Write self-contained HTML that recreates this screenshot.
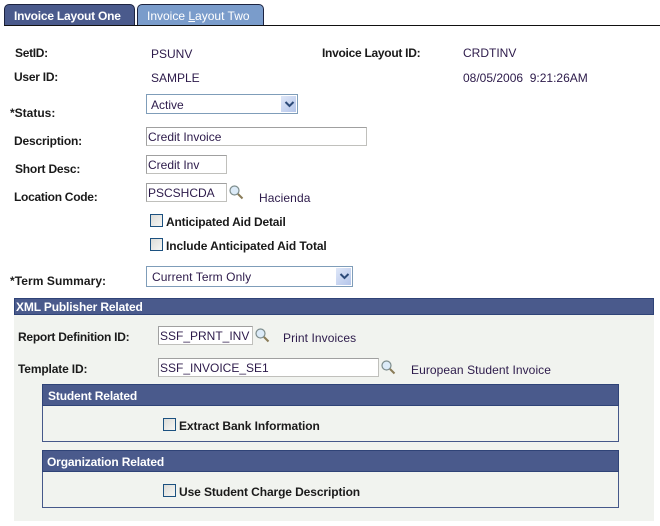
<!DOCTYPE html>
<html>
<head>
<meta charset="utf-8">
<style>
html,body{margin:0;padding:0;background:#fff;}
#p{position:relative;width:660px;height:526px;overflow:hidden;background:#fff;font-family:"Liberation Sans",Arial,sans-serif;font-size:12px;color:#333;}
#p div,#p svg{position:absolute;box-sizing:border-box;}
.t{white-space:pre;line-height:14px;height:14px;}
.l{font-weight:bold;color:#1a1a1a;letter-spacing:-.2px;}
.v{color:#2c1a4a;}
.i{background:#fff;border:1px solid #c0c0bc;border-top-color:#a0a0a0;border-left-color:#a0a0a0;color:#2c1a4a;padding:2px 0 0 1px;line-height:14px;white-space:pre;}
.s{background:#fff;border:1px solid #7f9db9;color:#2c1a4a;padding:1px 0 0 4px;white-space:pre;}
.a{right:1px;top:1px;width:15px;height:16px;background:linear-gradient(135deg,#dfe7f8,#b4c5ea);}
.c{width:13px;height:13px;background:linear-gradient(135deg,#dcdcd8,#f6f6f4);border:1px solid #1c5180;}
.h{background:#4a5a8c;border:1px solid #2f4377;color:#fff;font-weight:bold;line-height:14px;white-space:pre;letter-spacing:-.15px;}
.b{border:1px solid #46588a;}
</style>
</head>
<body>
<div id="p">
<div style="left:4px;top:4px;width:131px;height:22px;background:#4a5a8c;border:1px solid #1c2340;border-bottom:none;border-radius:5px 5px 0 0;"></div>
<div style="left:137px;top:4px;width:127px;height:22px;background:#7a9ccb;border:1px solid #1c2340;border-bottom:none;border-radius:5px 5px 0 0;"></div>
<div style="left:4px;top:25px;width:656px;height:1px;background:#111;"></div>
<div class="t" style="left:14px;top:9px;color:#fff;font-weight:bold;letter-spacing:-.22px;">Invoice Layout One</div>
<div class="t" style="left:147px;top:9px;color:#fff;">Invoice <span style="text-decoration:underline">L</span>ayout Two</div>

<div class="t l" style="left:15px;top:46px;letter-spacing:-.3px;">SetID:</div>
<div class="t v" style="left:151px;top:47px;">PSUNV</div>
<div class="t l" style="left:322px;top:46px;letter-spacing:-.28px;">Invoice Layout ID:</div>
<div class="t v" style="left:463px;top:46px;">CRDTINV</div>
<div class="t l" style="left:14px;top:70px;letter-spacing:-.25px;">User ID:</div>
<div class="t v" style="left:151px;top:71px;">SAMPLE</div>
<div class="t v" style="left:463px;top:71px;">08/05/2006  9:21:26AM</div>

<div class="t l" style="left:10px;top:106px;letter-spacing:0;">*Status:</div>
<div class="s" style="left:146px;top:94px;width:152px;height:20px;line-height:18px;">Active<div class="a"></div><svg style="left:136px;top:5px" width="13" height="9" viewBox="0 0 13 9"><path d="M2.5 2 6.5 6 10.5 2" fill="none" stroke="#2c4a78" stroke-width="2"/></svg></div>

<div class="t l" style="left:14px;top:134px;letter-spacing:-.17px;">Description:</div>
<div class="i" style="left:146px;top:127px;width:221px;height:19px;">Credit Invoice</div>
<div class="t l" style="left:15px;top:162px;">Short Desc:</div>
<div class="i" style="left:146px;top:155px;width:81px;height:19px;">Credit Inv</div>
<div class="t l" style="left:14px;top:190px;letter-spacing:-.28px;">Location Code:</div>
<div class="i" style="left:146px;top:183px;width:81px;height:19px;">PSCSHCDA</div>
<svg style="left:228px;top:184px" width="16" height="16" viewBox="0 0 16 16"><circle cx="6.5" cy="6.5" r="4.5" fill="#dcebf8" stroke="#7d8c8c" stroke-width="1.2"/><path d="M10 10 14.5 14.5" stroke="#8a7c58" stroke-width="2"/></svg>
<div class="t v" style="left:259px;top:191px;letter-spacing:.1px;">Hacienda</div>

<div class="c" style="left:150px;top:214px;"></div>
<div class="t l" style="left:166px;top:215px;letter-spacing:-.18px;">Anticipated Aid Detail</div>
<div class="c" style="left:150px;top:238px;"></div>
<div class="t l" style="left:166px;top:239px;letter-spacing:-.1px;">Include Anticipated Aid Total</div>

<div class="t l" style="left:10px;top:274px;letter-spacing:.07px;">*Term Summary:</div>
<div class="s" style="left:146px;top:266px;width:207px;height:21px;line-height:19px;padding-left:5px;letter-spacing:.08px;">Current Term Only<div class="a" style="height:17px"></div><svg style="left:191px;top:5px" width="13" height="9" viewBox="0 0 13 9"><path d="M2.5 2 6.5 6 10.5 2" fill="none" stroke="#2c4a78" stroke-width="2"/></svg></div>

<div style="left:14px;top:298px;width:640px;height:223px;background:#f1f3ef;"></div>
<div class="h" style="left:14px;top:298px;width:640px;height:17px;padding:1px 0 0 1px;">XML Publisher Related</div>

<div class="t l" style="left:18px;top:330px;letter-spacing:-.25px;">Report Definition ID:</div>
<div class="i" style="left:158px;top:326px;width:95px;height:19px;">SSF_PRNT_INV</div>
<svg style="left:254px;top:327px" width="16" height="16" viewBox="0 0 16 16"><circle cx="6.5" cy="6.5" r="4.5" fill="#dcebf8" stroke="#7d8c8c" stroke-width="1.2"/><path d="M10 10 14.5 14.5" stroke="#8a7c58" stroke-width="2"/></svg>
<div class="t v" style="left:283px;top:331px;letter-spacing:.08px;">Print Invoices</div>
<div class="t l" style="left:18px;top:362px;letter-spacing:-.15px;">Template ID:</div>
<div class="i" style="left:158px;top:358px;width:221px;height:19px;">SSF_INVOICE_SE1</div>
<svg style="left:380px;top:359px" width="16" height="16" viewBox="0 0 16 16"><circle cx="6.5" cy="6.5" r="4.5" fill="#dcebf8" stroke="#7d8c8c" stroke-width="1.2"/><path d="M10 10 14.5 14.5" stroke="#8a7c58" stroke-width="2"/></svg>
<div class="t v" style="left:411px;top:363px;letter-spacing:.08px;">European Student Invoice</div>

<div class="b" style="left:42px;top:384px;width:577px;height:58px;"></div>
<div class="h" style="left:42px;top:384px;width:577px;height:22px;padding:4px 0 0 5px;">Student Related</div>
<div class="c" style="left:163px;top:418px;"></div>
<div class="t l" style="left:179px;top:419px;letter-spacing:-.08px;">Extract Bank Information</div>

<div class="b" style="left:42px;top:450px;width:577px;height:58px;"></div>
<div class="h" style="left:42px;top:450px;width:577px;height:22px;padding:4px 0 0 4px;">Organization Related</div>
<div class="c" style="left:163px;top:484px;"></div>
<div class="t l" style="left:179px;top:485px;letter-spacing:-.1px;">Use Student Charge Description</div>
</div>
</body>
</html>
